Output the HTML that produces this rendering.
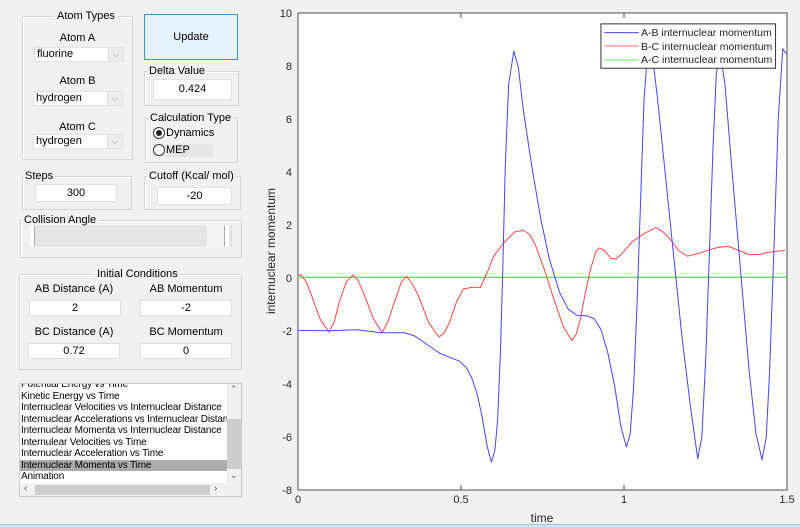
<!DOCTYPE html>
<html><head><meta charset="utf-8"><style>
*{box-sizing:border-box;margin:0;padding:0}
body{width:800px;height:527px;background:#f0f0f0;font-family:"Liberation Sans",sans-serif;font-size:11px;color:#000;position:relative;overflow:hidden}
.a{position:absolute}
.pan{position:absolute;border:1px solid #d5d5d5;box-shadow:inset 1px 1px 0 #fff}
.pt{position:absolute;background:#f0f0f0;padding:0 2px;font-size:11px;top:-7px;line-height:12px;white-space:nowrap}
.inp{position:absolute;background:#fff;border:1px solid #e0e0e0;text-align:center;font-size:11px;line-height:16px}
.sel{position:absolute;background:#fff;border:1px solid #e3e3e3;font-size:11px;line-height:16px;padding-left:2px}
.sel i{position:absolute;right:0;top:0;width:15px;height:100%;background:#ececec;border-left:1px solid #ddd;font-style:normal;color:#999;font-size:8px;text-align:center}
.lbl{position:absolute;font-size:11px;text-align:center;line-height:12px}
.row{height:11.5px;line-height:11.5px;font-size:10px;letter-spacing:-0.15px;padding-left:1px;white-space:nowrap;overflow:hidden}
</style></head><body>

<div class="pan" style="left:22px;top:16px;width:111px;height:144px"><span class="pt" style="left:32px">Atom Types</span></div>
<div class="lbl" style="left:22px;top:32px;width:111px">Atom A</div>
<div class="sel" style="left:34px;top:47px;width:90px;height:15px;line-height:13px">fluorine<i>⌵</i></div>
<div class="lbl" style="left:22px;top:75px;width:111px">Atom B</div>
<div class="sel" style="left:33px;top:91px;width:90px;height:15px;line-height:13px">hydrogen<i>⌵</i></div>
<div class="lbl" style="left:22px;top:121px;width:111px">Atom C</div>
<div class="sel" style="left:33px;top:134px;width:90px;height:15px;line-height:13px">hydrogen<i>⌵</i></div>

<div class="a" style="left:144px;top:14px;width:94px;height:46px;background:#e5f1fb;border:1px solid #3c8fd6;text-align:center;line-height:44px">Update</div>

<div class="pan" style="left:144px;top:71px;width:95px;height:35px"><span class="pt" style="left:2px">Delta Value</span></div>
<div class="inp" style="left:153px;top:79px;width:79px;height:21px;line-height:19px">0.424</div>

<div class="pan" style="left:145px;top:118px;width:93px;height:45px"><span class="pt" style="left:2px">Calculation Type</span></div>
<div class="a" style="left:153px;top:127px;width:12px;height:12px;border:1px solid #333;border-radius:50%;background:#fff"><div class="a" style="left:2px;top:2px;width:6px;height:6px;border-radius:50%;background:#222"></div></div>
<div class="a" style="left:166px;top:127px;line-height:12px">Dynamics</div>
<div class="a" style="left:153px;top:144px;width:60px;height:13px;background:#e6e6e6"></div>
<div class="a" style="left:153px;top:144px;width:12px;height:12px;border:1px solid #333;border-radius:50%;background:#fff"></div>
<div class="a" style="left:166px;top:144px;line-height:12px">MEP</div>

<div class="pan" style="left:22px;top:176px;width:110px;height:34px"><span class="pt" style="left:0px">Steps</span></div>
<div class="inp" style="left:35px;top:184px;width:82px;height:18px">300</div>
<div class="pan" style="left:144px;top:176px;width:97px;height:34px"><span class="pt" style="left:2px">Cutoff (Kcal/ mol)</span></div>
<div class="inp" style="left:157px;top:187px;width:75px;height:18px">-20</div>

<div class="pan" style="left:20px;top:220px;width:222px;height:38px"><span class="pt" style="left:1px">Collision Angle</span></div>
<div class="a" style="left:30px;top:226px;width:202px;height:20px;background:#e6e6e6;border:1px solid #ddd"></div>
<div class="a" style="left:30px;top:226px;width:5px;height:20px;background:#fff;border-right:1px solid #aaa"></div>
<div class="a" style="left:224px;top:226px;width:5px;height:20px;background:#fff;border-left:1px solid #aaa"></div>
<div class="a" style="left:207px;top:226px;width:17px;height:20px;background:#f4f4f4"></div>

<div class="pan" style="left:19px;top:274px;width:223px;height:96px"><span class="pt" style="left:75px">Initial Conditions</span></div>
<div class="lbl" style="left:24px;top:283px;width:100px">AB Distance (A)</div>
<div class="lbl" style="left:136px;top:283px;width:100px">AB Momentum</div>
<div class="inp" style="left:29px;top:300px;width:92px;height:16px;line-height:14px">2</div>
<div class="inp" style="left:140px;top:300px;width:92px;height:16px;line-height:14px">-2</div>
<div class="lbl" style="left:24px;top:326px;width:100px">BC Distance (A)</div>
<div class="lbl" style="left:136px;top:326px;width:100px">BC Momentum</div>
<div class="inp" style="left:28px;top:343px;width:92px;height:16px;line-height:14px">0.72</div>
<div class="inp" style="left:140px;top:343px;width:92px;height:16px;line-height:14px">0</div>

<div class="a" style="left:19px;top:383px;width:223px;height:114px;background:#fff;border:1px solid #ccc;overflow:hidden">
<div style="margin-top:-5px">
<div class="row">Potential Energy vs Time</div>
<div class="row">Kinetic Energy vs Time</div>
<div class="row">Internuclear Velocities vs Internuclear Distance</div>
<div class="row">Internuclear Accelerations vs Internuclear Distance</div>
<div class="row">Internuclear Momenta vs Internuclear Distance</div>
<div class="row">Internulear Velocities vs Time</div>
<div class="row">Internuclear Acceleration vs Time</div>
<div class="row" style="background:#ababab;width:207px">Internuclear Momenta vs Time</div>
<div class="row">Animation</div>
</div>
<div class="a" style="left:207px;top:0;width:15px;height:99px;background:#f0f0f0"><div class="a" style="left:0;top:35px;width:15px;height:50px;background:#cdcdcd"></div><div class="a" style="left:3px;top:0;font-size:9px;color:#666">⌃</div><div class="a" style="left:3px;top:86px;font-size:9px;color:#666">⌄</div></div>
<div class="a" style="left:0;top:99px;width:207px;height:14px;background:#f0f0f0"><div class="a" style="left:15px;top:2px;width:175px;height:10px;background:#cdcdcd"></div><div class="a" style="left:4px;top:0;font-size:10px;color:#555">‹</div><div class="a" style="left:194px;top:0;font-size:10px;color:#555">›</div></div>
<div class="a" style="left:207px;top:99px;width:15px;height:14px;background:#f0f0f0"></div>
</div>

<div class="a" style="left:0;top:524px;width:800px;height:3px;background:#cfe3f6;border-top:1px solid #9cc6ec"></div>

<svg class="a" style="left:0;top:0" width="800" height="527" font-family="Liberation Sans, sans-serif" font-size="11">
<rect x="298" y="13" width="489" height="477" fill="#fff" stroke="#262626" stroke-width="0.8"/>
<g fill="#262626" text-anchor="end">
<text x="292" y="17">10</text><text x="292" y="70">8</text><text x="292" y="123">6</text><text x="292" y="176">4</text><text x="292" y="229">2</text><text x="292" y="282">0</text><text x="292" y="335">-2</text><text x="292" y="388">-4</text><text x="292" y="441">-6</text><text x="292" y="494">-8</text>
</g>
<g fill="#262626" text-anchor="middle">
<text x="298" y="503">0</text><text x="461" y="503">0.5</text><text x="624" y="503">1</text><text x="787" y="503">1.5</text>
<text x="542" y="522" font-size="12">time</text>
<text transform="translate(275,251) rotate(-90)" font-size="12">internuclear momentum</text>
</g>
<g stroke="#262626" stroke-width="0.8">
<line x1="461" y1="490" x2="461" y2="485"/><line x1="624" y1="490" x2="624" y2="485"/><line x1="461" y1="13" x2="461" y2="18"/><line x1="624" y1="13" x2="624" y2="18"/>
</g>
</svg>

<svg class="a" style="left:260px;top:0" width="540" height="527" viewBox="0 0 1568 1568" preserveAspectRatio="none">
<line x1="110" y1="825" x2="1530" y2="825" stroke="#4ddd4d" stroke-width="1.2" vector-effect="non-scaling-stroke"/>
<polyline fill="none" stroke="#f44" stroke-width="1" vector-effect="non-scaling-stroke" stroke-linejoin="round" points="110,820 120,818 135,840 150,880 175,950 200,988 215,960 230,900 250,840 270,818 285,835 300,870 330,950 355,990 372,955 390,900 410,840 425,822 440,840 460,880 490,960 520,1003 535,990 550,960 570,900 590,860 615,855 640,855 660,810 680,760 710,720 740,690 765,685 785,700 800,730 825,800 850,880 880,970 905,1013 918,995 930,950 945,870 960,800 975,750 985,738 1000,745 1020,770 1035,770 1055,750 1080,720 1115,695 1150,677 1170,690 1190,710 1215,745 1240,762 1270,755 1300,745 1330,736 1360,733 1390,745 1420,758 1450,757 1480,750 1525,745"/>
<polyline fill="none" stroke="#44f" stroke-width="1" vector-effect="non-scaling-stroke" stroke-linejoin="round" points="110,983 200,984 280,981 320,986 350,990 420,990 450,1000 485,1025 520,1050 555,1065 580,1075 600,1095 615,1125 630,1170 645,1240 660,1330 672,1375 682,1340 690,1250 698,1050 705,800 712,500 722,250 737,152 750,200 765,330 790,500 815,650 840,770 870,870 895,920 920,938 950,940 970,948 990,980 1010,1050 1030,1150 1048,1270 1064,1330 1075,1290 1085,1150 1095,900 1105,600 1115,300 1125,160 1140,170 1155,300 1175,500 1200,750 1225,1000 1250,1210 1271,1365 1283,1300 1295,1050 1305,750 1315,450 1325,220 1335,150 1350,250 1370,500 1395,800 1420,1100 1440,1290 1458,1368 1470,1300 1480,1100 1492,750 1505,350 1518,145 1528,160"/>
<rect x="990" y="71" width="507" height="132" fill="#fff" stroke="#333" stroke-width="1" vector-effect="non-scaling-stroke"/>
<line x1="1000" y1="97" x2="1100" y2="97" stroke="#44f" stroke-width="1" vector-effect="non-scaling-stroke"/>
<line x1="1000" y1="137" x2="1100" y2="137" stroke="#f66" stroke-width="1" vector-effect="non-scaling-stroke"/>
<line x1="1000" y1="178" x2="1100" y2="178" stroke="#6e6" stroke-width="1" vector-effect="non-scaling-stroke"/>
</svg>
<div class="a" style="left:641px;top:27px;font-size:10.5px;line-height:13.7px;color:#222;white-space:nowrap">A-B internuclear momentum<br>B-C internuclear momentum<br>A-C internuclear momentum</div>

</body></html>
